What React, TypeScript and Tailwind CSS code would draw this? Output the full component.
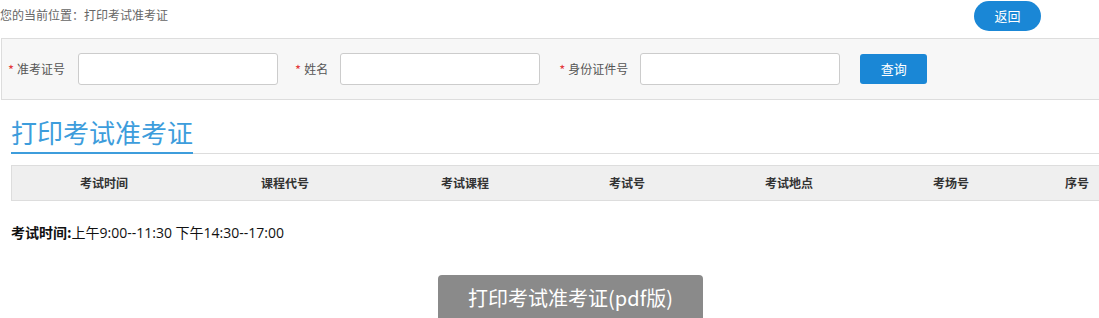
import React from "react";

const font = { fontFamily: '"Noto Sans CJK SC", "Noto Sans", sans-serif' };
const mixed = { fontFamily: '"Open Sans", "Noto Sans CJK SC", sans-serif' };

function Field({ label, gap }: { label: string; gap: string }) {
  return (
    <div className="flex items-center">
      <span className="text-[#e4393c] text-[13px] mr-[3px] leading-none">*</span>
      <span className="text-[12px] text-[#555]">{label}</span>
      <input className={`${gap} h-[32px] w-[200px] bg-white border border-[#ccc] rounded-[3px]`} />
    </div>
  );
}

export default function App() {
  const cols: [string, string][] = [
    ["考试时间", "w-[184px]"],
    ["课程代号", "w-[178px]"],
    ["考试课程", "w-[182px]"],
    ["考试号", "w-[142px]"],
    ["考试地点", "w-[182px]"],
    ["考场号", "w-[142px]"],
    ["序号", "w-[110px]"],
  ];
  return (
    <div className="w-[1099px] h-[318px] overflow-hidden bg-white" style={font}>
      <div className="w-[1141px]">
        <div className="flex items-start h-[38px]">
          <div className="text-[12px] text-[#666] pt-[6px] leading-[18px]">您的当前位置：打印考试准考证</div>
          <button className="ml-auto mr-[100px] mt-[1px] w-[67px] h-[30px] rounded-full bg-[#1a87d6] text-white text-[13px]">返回</button>
        </div>
        <div className="ml-[1px] h-[62px] bg-[#f7f7f7] border border-[#ddd] flex items-center pl-[6px]">
          <div className="flex items-center">
            <Field label="准考证号" gap="ml-[13px]" />
            <div className="w-[17px]" />
            <Field label="姓名" gap="ml-[12px]" />
            <div className="w-[19px]" />
            <Field label="身份证件号" gap="ml-[12px]" />
            <button className="ml-[20px] w-[67px] h-[30px] rounded-[3px] bg-[#1a87d6] text-white text-[13px]">查询</button>
          </div>
        </div>
        <div className="ml-[11px] mt-[15px] flex items-end border-b border-[#ddd]">
          <div className="text-[26px] leading-[34px] text-[#3d9ddc] border-b-2 border-[#3d9ddc] -mb-[1px] pb-[3px]">打印考试准考证</div>
        </div>
        <div className="ml-[11px] mt-[11px] flex bg-[#efefef] border border-[#ddd] h-[36px]">
          {cols.map(([t, w]) => (
            <div key={t} className={`${w} flex items-center justify-center text-[12px] font-bold text-[#333]`}>{t}</div>
          ))}
        </div>
        <div className="ml-[11px] mt-[20px] text-[14px] text-[#111] leading-[22px]" style={mixed}>
          <span className="font-bold" style={font}>考试时间:</span>上午9:00--11:30 下午14:30--17:00
        </div>
        <div className="mt-[31px] ml-[438px]">
          <button className="w-[265px] h-[46px] rounded-[4px] bg-[#8a8a8a] text-white text-[20px]">打印考试准考证(pdf版)</button>
        </div>
      </div>
    </div>
  );
}
